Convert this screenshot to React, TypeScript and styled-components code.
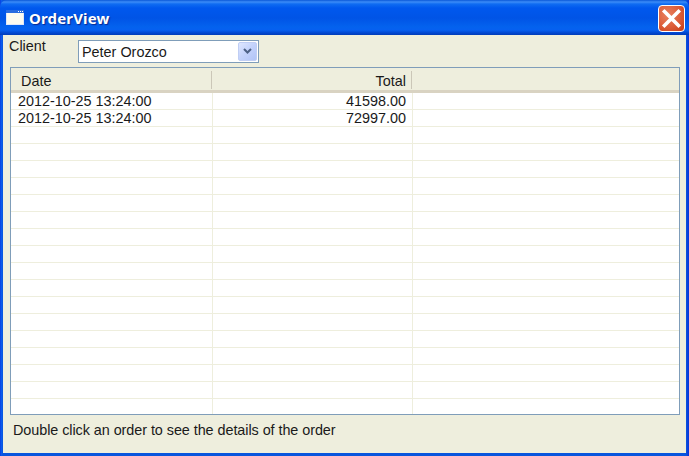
import styled, { createGlobalStyle } from "styled-components";

const orders = [
    { date: "2012-10-25 13:24:00", total: "41598.00" },
    { date: "2012-10-25 13:24:00", total: "72997.00" },
];
const ROW_COUNT = 19;

const Global = createGlobalStyle`
    html, body {
        margin: 0;
        padding: 0;
        background: #0831d9;
    }
`;

const Window = styled.div`
    width: 689px;
    height: 456px;
    display: flex;
    flex-direction: column;
    overflow: hidden;
    font-family: "Liberation Sans", Arial, sans-serif;
    font-size: 14.4px;
    color: #1a1a1a;
    background: linear-gradient(90deg, #0831d9 0, #0a5cf0 1px, #0855dd 3px, #0855dd 686px, #0831d9 689px);
`;

const TitleBar = styled.div`
    height: 35px;
    flex: none;
    display: flex;
    align-items: center;
    box-sizing: border-box;
    padding: 0 4px 0 6px;
    border-radius: 7px 7px 0 0;
    background: linear-gradient(180deg, #0a58d8 0, #3c8cf8 2px, #0f6cf2 4px, #0058ee 8px, #0054e6 18px, #0462ee 27px, #0660f0 30px, #0146cf 33px, #003cb8 35px);
`;

const TitleIcon = styled.svg`
    width: 18px;
    height: 15px;
    flex: none;
`;

const Title = styled.span`
    margin-left: 5px;
    margin-top: 1px;
    color: #fff;
    font-family: "Noto Sans", "Open Sans", sans-serif;
    font-size: 15px;
    font-weight: 700;
    letter-spacing: 0.15px;
    text-shadow: 1px 1px 1px #0a2a90;
`;

const CloseButton = styled.button`
    margin-left: auto;
    margin-top: 1px;
    width: 27px;
    height: 27px;
    padding: 0;
    display: flex;
    align-items: center;
    justify-content: center;
    box-sizing: border-box;
    border: 1px solid #fff;
    border-radius: 4px;
    background: radial-gradient(circle at 35% 35%, #e8805f 0, #dc5c38 55%, #c63c14 100%);
`;

const Body = styled.div`
    flex: 1;
    margin: 0 3px 3px;
    display: flex;
    flex-direction: column;
    background: #eeeedd;
    box-sizing: border-box;
    padding: 5px 6px 0 7px;
`;

const ClientRow = styled.div`
    display: flex;
    align-items: flex-start;
    height: 27px;
`;

const ClientLabel = styled.label`
    width: 68px;
    margin-top: -2px;
    line-height: 16px;
    margin-left: -1px;
    margin-right: 1px;
`;

const Combo = styled.div`
    width: 181px;
    height: 23px;
    box-sizing: border-box;
    border: 1px solid #7f9db9;
    background: #fff;
    display: flex;
    align-items: center;
    justify-content: space-between;
    padding: 0 1px 0 3px;
`;

const ComboArrow = styled.div`
    width: 19px;
    height: 19px;
    border-radius: 2px;
    display: flex;
    align-items: center;
    justify-content: center;
    background: linear-gradient(135deg, #dfe7ff 0, #c3d2fb 50%, #b1c4f6 100%);
    border: 1px solid #c0cef4;
    box-sizing: border-box;
`;

const TableBox = styled.div`
    width: 670px;
    height: 348px;
    box-sizing: border-box;
    border: 1px solid #7f9db9;
    background: #fff;
    display: flex;
    flex-direction: column;
    overflow: hidden;
`;

const Header = styled.div`
    height: 25px;
    flex: none;
    display: grid;
    grid-template-columns: 201px 200px 1fr;
    box-sizing: border-box;
    background: #eeeedd;
    border-bottom: 3px solid #d9d3c2;
    padding-top: 3px;
`;

const HeaderCell = styled.div<{ $right?: boolean }>`
    height: 18px;
    line-height: 20px;
    box-sizing: border-box;
    padding: 0 5px 0 10px;
    text-align: ${(p) => (p.$right ? "right" : "left")};
    border-right: 1px solid #cbc7b8;
`;

const Row = styled.div`
    height: 17px;
    flex: none;
    display: grid;
    grid-template-columns: 202px 200px 1fr;
    box-sizing: border-box;
    border-bottom: 1px solid #eeeedd;
    &:last-child {
        height: 15px;
        border-bottom: none;
    }
`;

const Cell = styled.div<{ $right?: boolean }>`
    line-height: 16px;
    box-sizing: border-box;
    padding: 0 6px 0 7px;
    text-align: ${(p) => (p.$right ? "right" : "left")};
    border-right: 1px solid #eeeedd;
    &:last-child {
        border-right: none;
    }
`;

const Hint = styled.div`
    margin-top: 7px;
    margin-left: 3px;
    line-height: 16px;
    letter-spacing: -0.057px;
`;

export default function App() {
    const rows = Array.from({ length: ROW_COUNT }, (_, i) => orders[i]);
    return (
        <Window>
            <Global />
            <TitleBar>
                <TitleIcon viewBox="0 0 18 15">
                    <rect x="0.5" y="0.5" width="17" height="14" fill="#fdfbf0" stroke="#dfe8f8" />
                    <rect x="0" y="0" width="18" height="3" fill="#2a6ce0" />
                    <rect x="12" y="1" width="1" height="1" fill="#fff" />
                    <rect x="14" y="1" width="1" height="1" fill="#fff" />
                    <rect x="16" y="1" width="1" height="1" fill="#fff" />
                </TitleIcon>
                <Title>OrderView</Title>
                <CloseButton aria-label="Close">
                    <svg width="21" height="21" viewBox="0 0 21 21">
                        <path d="M3.5 3.5 L17.5 17.5 M17.5 3.5 L3.5 17.5" stroke="#fff" strokeWidth="3.6" strokeLinecap="square" />
                    </svg>
                </CloseButton>
            </TitleBar>
            <Body>
                <ClientRow>
                    <ClientLabel>Client</ClientLabel>
                    <Combo>
                        Peter Orozco
                        <ComboArrow>
                            <svg width="11" height="9" viewBox="0 0 11 9">
                                <path d="M2 2 L5.5 5.5 L9 2" fill="none" stroke="#4d6185" strokeWidth="2" />
                            </svg>
                        </ComboArrow>
                    </Combo>
                </ClientRow>
                <TableBox>
                    <Header>
                        <HeaderCell>Date</HeaderCell>
                        <HeaderCell $right>Total</HeaderCell>
                        <div />
                    </Header>
                    {rows.map((order, i) => (
                        <Row key={i}>
                            <Cell>{order?.date}</Cell>
                            <Cell $right>{order?.total}</Cell>
                            <Cell />
                        </Row>
                    ))}
                </TableBox>
                <Hint>Double click an order to see the details of the order</Hint>
            </Body>
        </Window>
    );
}
